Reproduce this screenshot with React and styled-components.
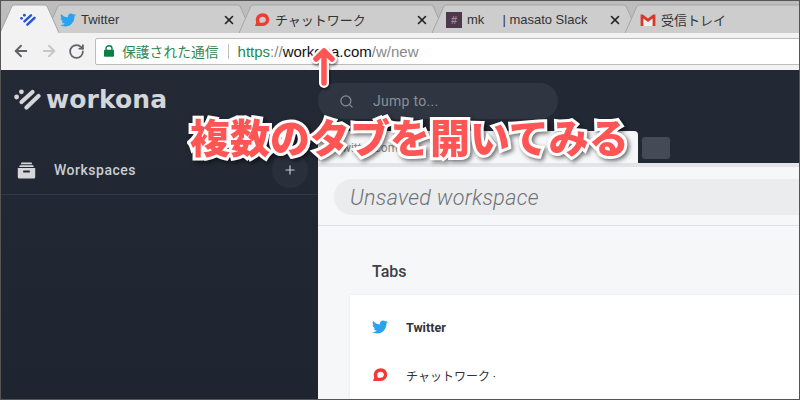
import React from 'react';
import styled, { createGlobalStyle } from 'styled-components';
import { ArrowLeft, ArrowRight, RotateCw, Search, Plus, X } from 'lucide-react';
import { FaTwitter } from 'react-icons/fa';

const GlobalStyle = createGlobalStyle`
  html, body { margin: 0; padding: 0; background: #222; }
  body { font-family: Roboto, "Liberation Sans", "Noto Sans CJK JP", sans-serif; }
`;

const Frame = styled.div`
  position: relative;
  width: 800px;
  height: 400px;
  box-sizing: border-box;
  overflow: hidden;
  display: flex;
  flex-direction: column;
  border: 1px solid #555;
`;

// chrome tabs
const TabStrip = styled.div`
  height: 32px;
  flex: none;
  display: flex;
  align-items: stretch;
  background: #bdbdbd;
  overflow: hidden;
`;

const TabWrap = styled.div`
  position: relative;
  flex: none;
  box-sizing: border-box;
  width: ${p => p.$w}px;
  margin-left: ${p => p.$first ? '-1px' : '-13px'};
  padding: 5px 16px 0 ${p => p.$pad || 14}px;
  display: flex;
  align-items: center;
  z-index: ${p => p.$active ? 5 : 1};
  font-family: "Liberation Sans", "Noto Sans CJK JP", sans-serif;
  font-size: 13px;
  color: #333;
`;

const TabShape = styled.svg`
  position: absolute;
  left: 0;
  top: 0;
  z-index: -1;
`;

const Favicon = styled.span`
  flex: none;
  width: 16px;
  height: 16px;
  display: flex;
  align-items: center;
  justify-content: center;
`;

const TabTitle = styled.span`
  margin-left: 5px;
  white-space: pre;
`;

const TabClose = styled(X)`
  margin-left: auto;
  flex: none;
  color: #222;
`;

const SlackIcon = styled.span`
  width: 16px;
  height: 16px;
  background: #4d394b;
  color: #a08a9e;
  font-size: 11px;
  font-weight: 700;
  line-height: 16px;
  text-align: center;
`;

const Toolbar = styled.div`
  height: 37px;
  flex: none;
  box-sizing: border-box;
  display: flex;
  align-items: center;
  padding: 0 0 1px 11px;
  background: #f2f2f2;
`;

const NavButton = styled.span`
  flex: none;
  width: ${p => p.$w}px;
  display: flex;
  color: ${p => p.$off ? '#c6c6c6' : '#5f6368'};
`;

const AddressBar = styled.div`
  flex: 1;
  height: 27px;
  box-sizing: border-box;
  margin-right: -4px;
  padding-left: 8px;
  display: flex;
  align-items: center;
  background: #fff;
  border: 1px solid #bcbcbc;
  border-radius: 2px;
  font-family: "Liberation Sans", "Noto Sans CJK JP", sans-serif;
  font-size: 15px;
`;

const Secure = styled.span`
  margin-left: 8px;
  font-size: 13.8px;
  color: #2f8a52;
`;

const Separator = styled.span`
  width: 1px;
  height: 15px;
  margin: 0 9px;
  background: #bdbdbd;
`;

const UrlPart = styled.span`
  color: ${p => p.$c};
`;

// workona app
const AppBody = styled.div`
  flex: 1;
  min-height: 0;
  display: flex;
  background: #222834;
`;

const Sidebar = styled.aside`
  flex: none;
  width: 317px;
  display: flex;
  flex-direction: column;
  background: linear-gradient(#232a36, #1e2530);
`;

const LogoRow = styled.div`
  height: 56px;
  padding: 2px 0 0 13px;
  box-sizing: border-box;
  display: flex;
  align-items: center;
  gap: 5px;
`;

const LogoText = styled.span`
  font-family: "DejaVu Sans", sans-serif;
  font-size: 25px;
  font-weight: 700;
  letter-spacing: 0.1px;
  color: #d4d6da;
`;

const SideRow = styled.div`
  margin-top: 20px;
  height: 48px;
  padding: 0 10px 0 16px;
  display: flex;
  align-items: center;
  border-bottom: 1px solid #323946;
`;

const SideLabel = styled.span`
  margin-left: 18px;
  font-size: 14px;
  font-weight: 500;
  letter-spacing: 0.5px;
  color: #c9ccd1;
`;

const AddButton = styled.span`
  margin-left: auto;
  width: 36px;
  height: 36px;
  border-radius: 50%;
  display: flex;
  align-items: center;
  justify-content: center;
  background: #2a303b;
  color: #c9ccd1;
`;

const Main = styled.main`
  flex: 1;
  min-width: 0;
  display: flex;
  flex-direction: column;
`;

const SearchBox = styled.div`
  width: 240px;
  height: 36px;
  flex: none;
  margin-top: 13px;
  box-sizing: border-box;
  padding-left: 21px;
  display: flex;
  align-items: center;
  gap: 19px;
  border-radius: 18px;
  background: #2f3642;
  color: #8a8f97;
  font-size: 14px;
  letter-spacing: 0.3px;
`;

const WorkspaceTabs = styled.div`
  margin-top: 12px;
  height: 32px;
  flex: none;
  display: flex;
  align-items: flex-start;
  gap: 4px;
`;

const WorkspaceTab = styled.div`
  width: 320px;
  height: 32px;
  box-sizing: border-box;
  padding: 10px 38px 0 20px;
  display: flex;
  justify-content: space-between;
  border-radius: 0 4px 0 0;
  background: #f6f7f9;
  font-size: 12px;
  color: #888;
`;

const AddTabButton = styled.div`
  width: 28px;
  height: 22px;
  margin-top: 6px;
  border-radius: 3px;
  background: #444b56;
`;

const Panel = styled.div`
  flex: 1;
  min-height: 0;
  display: flex;
  flex-direction: column;
  background: #f6f7f9;
  box-shadow: inset 0 4px 0 #e3e4e8;
`;

const NameRow = styled.div`
  flex: none;
  height: 63px;
  box-sizing: border-box;
  padding: 16px 0 0 16px;
  border-bottom: 1px solid #dfe0e3;
`;

const NameInput = styled.div`
  height: 36px;
  box-sizing: border-box;
  padding-left: 16px;
  display: flex;
  align-items: center;
  border-radius: 18px 0 0 18px;
  background: #ebecee;
  font-size: 21.5px;
  font-weight: 300;
  font-style: italic;
  letter-spacing: 0.3px;
  color: #6f7277;
`;

const SectionTitle = styled.h2`
  margin: 34px 0 0 54px;
  font-size: 16px;
  line-height: 24px;
  font-weight: 500;
  color: #3c4048;
`;

const Card = styled.div`
  flex: 1;
  margin: 11px 0 0 32px;
  padding-top: 8px;
  background: #fff;
  box-shadow: 0 0 2px #e4e5e8;
`;

const TabRow = styled.div`
  height: 48px;
  padding-left: 22px;
  display: flex;
  align-items: center;
  gap: 18px;
  font-size: ${p => p.$bold ? 12.5 : 12}px;
  font-weight: ${p => p.$bold ? 700 : 400};
  color: #2f343c;
`;

// overlay annotation
const Headline = styled.div`
  position: absolute;
  left: 189px;
  top: 108px;
  z-index: 20;
  white-space: nowrap;
  font-family: "Noto Sans CJK JP", sans-serif;
  font-size: 40px;
  line-height: 54px;
  font-weight: 900;
  color: #ff5555;
  -webkit-text-stroke: 6px #fff;
  paint-order: stroke fill;
  filter: drop-shadow(2px 2px 2px rgba(0, 0, 0, 0.55));
`;

const UpArrow = styled.svg`
  position: absolute;
  left: 308px;
  top: 41px;
  z-index: 20;
  filter: drop-shadow(1px 2px 1px rgba(0, 0, 0, 0.45));
`;

const tabPath = (w, top = 5, h = 32, slant = 12) =>
  `M0 ${h} L${slant} ${top} Q${slant + 1} ${top - 1} ${slant + 3} ${top - 1} L${w - slant - 3} ${top - 1} Q${w - slant - 1} ${top - 1} ${w - slant} ${top} L${w} ${h}`;

const Tab = ({ w = 206, first, active, pad, icon, title, close = true }) => (
  <TabWrap $w={w} $first={first} $active={active} $pad={pad}>
    <TabShape width={w} height={32}>
      <path d={tabPath(w) + 'Z'} fill={active ? '#f2f2f2' : '#cdcdcd'} stroke="none" />
      <path d={tabPath(w)} fill="none" stroke="#a6a6a6" strokeWidth="1" />
    </TabShape>
    <Favicon>{icon}</Favicon>
    {title && <TabTitle>{title}</TabTitle>}
    {close && title && <TabClose size={14} strokeWidth={2.8} />}
  </TabWrap>
);

const WorkonaMark = ({ color, size = 27 }) => (
  <svg width={size} height={size * 24 / 27} viewBox="0 0 27 24" fill="none" stroke={color} strokeLinecap="round">
    <circle cx="2.6" cy="10" r="2.4" fill={color} stroke="none" />
    <circle cx="7.4" cy="4.8" r="2.4" fill={color} stroke="none" />
    <path d="M7.5 15 L18.5 5" strokeWidth="4.2" />
    <path d="M12.5 20.5 L24.5 9" strokeWidth="4.2" />
  </svg>
);

const ChatworkIcon = ({ size = 16 }) => (
  <svg width={size} height={size} viewBox="0 0 16 16">
    <path
      fill="#f03a33"
      fillRule="evenodd"
      d="M8.8 1.2C12.4 1.2 15.2 4 15.2 7.6S12.4 14 8.8 14H1L2.2 10.6C1.9 9.7 1.8 8.7 1.8 7.6 1.8 4 5.2 1.2 8.8 1.2ZM8.6 4.8C6.9 4.8 5.2 6 5.2 7.8 5.2 8.6 5.4 9.4 5.8 10L5.5 10.8H8.6C10.3 10.8 11.9 9.5 11.9 7.8S10.3 4.8 8.6 4.8Z"
    />
  </svg>
);

const GmailIcon = () => (
  <svg width="16" height="14" viewBox="0 0 16 14">
    <path d="M1 2.4 L8 7.8 L15 2.4 V13 H1Z" fill="#eee" />
    <path d="M0.6 1.4 H2.8 L8 5.6 L13.2 1.4 H15.4 V13 H12.6 V5.4 L8 9 L3.4 5.4 V13 H0.6Z" fill="#d8372b" />
  </svg>
);

const LockIcon = () => (
  <svg width="10" height="12" viewBox="0 0 10 12">
    <path d="M2 5V3.4C2 1.8 3.3.7 5 .7S8 1.8 8 3.4V5" fill="none" stroke="#0b8043" strokeWidth="1.4" />
    <rect x="0" y="4.8" width="10" height="7" rx="1" fill="#0b8043" />
  </svg>
);

const WorkspacesIcon = () => (
  <svg width="19" height="17" viewBox="0 0 19 17">
    <path d="M4.4 0.5H14.6L15.2 2.2H3.8Z" fill="#d5d7da" />
    <path d="M2.8 3.2H16.2L16.8 5H2.2Z" fill="#d5d7da" />
    <path d="M0.8 6H18.2V15C18.2 16 17.4 16.6 16.6 16.6H2.4C1.6 16.6 0.8 16 0.8 15ZM6.2 8.6V10.6H12.8V8.6Z" fill="#d5d7da" fillRule="evenodd" />
  </svg>
);

const App = () => (
  <Frame>
    <GlobalStyle />
    <TabStrip>
      <Tab first w={59} active pad={20} icon={<WorkonaMark color="#2456d6" size={17} />} close={false} />
      <Tab icon={<FaTwitter size={16} color="#2aa3ef" />} title="Twitter" />
      <Tab pad={15} icon={<ChatworkIcon />} title="チャットワーク" />
      <Tab icon={<SlackIcon>#</SlackIcon>} title={'mk     | masato Slack'} />
      <Tab pad={15} icon={<GmailIcon />} title="受信トレイ" close={false} />
    </TabStrip>
    <Toolbar>
      <NavButton $w={28}><ArrowLeft size={18} strokeWidth={2.5} /></NavButton>
      <NavButton $w={28} $off><ArrowRight size={18} strokeWidth={2.5} /></NavButton>
      <NavButton $w={27}><RotateCw size={17} strokeWidth={2.5} /></NavButton>
      <AddressBar>
        <LockIcon />
        <Secure>保護された通信</Secure>
        <Separator />
        <UrlPart $c="#1f8a4c">https</UrlPart>
        <UrlPart $c="#888">://</UrlPart>
        <UrlPart $c="#111">workona.com</UrlPart>
        <UrlPart $c="#888">/w/new</UrlPart>
      </AddressBar>
    </Toolbar>
    <AppBody>
      <Sidebar>
        <LogoRow>
          <WorkonaMark color="#d4d6da" />
          <LogoText>workona</LogoText>
        </LogoRow>
        <SideRow>
          <WorkspacesIcon />
          <SideLabel>Workspaces</SideLabel>
          <AddButton><Plus size={14} /></AddButton>
        </SideRow>
      </Sidebar>
      <Main>
        <SearchBox>
          <Search size={15} />
          Jump to...
        </SearchBox>
        <WorkspaceTabs>
          <WorkspaceTab>
            <span>twitter.com</span>
            <span>=</span>
          </WorkspaceTab>
          <AddTabButton />
        </WorkspaceTabs>
        <Panel>
          <NameRow>
            <NameInput>Unsaved workspace</NameInput>
          </NameRow>
          <SectionTitle>Tabs</SectionTitle>
          <Card>
            <TabRow $bold><FaTwitter size={16} color="#2aa3ef" />Twitter</TabRow>
            <TabRow><ChatworkIcon />チャットワーク ·</TabRow>
          </Card>
        </Panel>
      </Main>
    </AppBody>
    <UpArrow width="30" height="48" viewBox="0 0 30 48">
      <path d="M15 9V41M7 17L15 9L23 17" fill="none" stroke="#fff" strokeWidth="10" strokeLinecap="round" strokeLinejoin="round" />
      <path d="M15 9V41M7 17L15 9L23 17" fill="none" stroke="#ff5555" strokeWidth="5.5" strokeLinecap="round" strokeLinejoin="round" />
    </UpArrow>
    <Headline>複数のタブを開いてみる</Headline>
  </Frame>
);

export default App;
